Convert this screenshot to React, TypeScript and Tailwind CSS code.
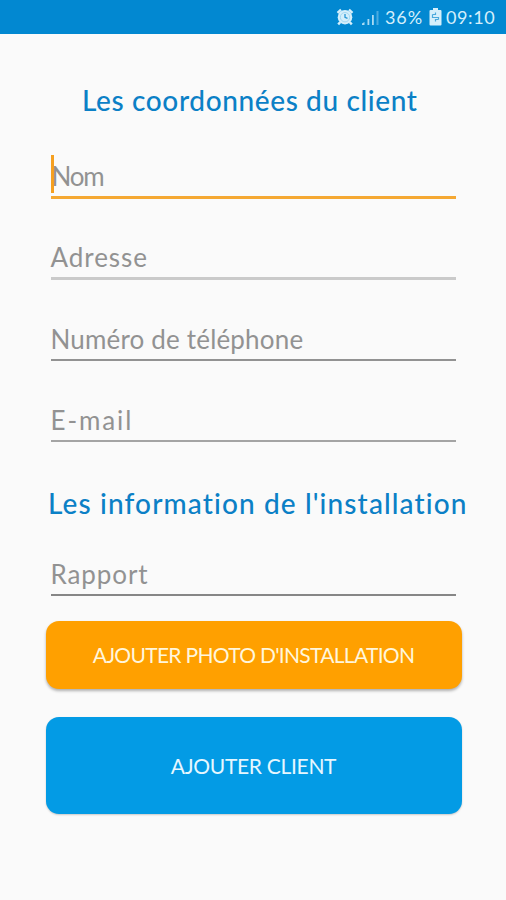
import { ReactNode } from 'react';

type FieldProps = {
  label: string;
  className: string;
  textClass: string;
  focused?: boolean;
};

function Field({ label, className, textClass, focused }: FieldProps) {
  return (
    <div className={`relative mx-auto flex w-[405px] items-end ${className}`}>
      {focused && (
        <span className="absolute -top-[3px] left-0 h-[38px] w-[3px] bg-[#f5a021]" />
      )}
      <span className={`whitespace-nowrap text-[26px] leading-[30px] text-[#929292] ${textClass}`}>
        {label}
      </span>
    </div>
  );
}

function Title({ children, className }: { children: ReactNode; className: string }) {
  return (
    <h2 className={`whitespace-nowrap text-[28px] leading-9 font-medium text-[#0b80c6] ${className}`}>
      {children}
    </h2>
  );
}

function StatusBar() {
  return (
    <header className="flex h-[34px] items-center bg-[#0288d1] pl-[336px] text-[#d5effb]">
      {/* Alarm */}
      <svg width="18" height="18" viewBox="0 0 18 18" fill="none">
        <path d="M1.5 4.8 5 1.7M16.5 4.8 13 1.7M4.2 14.2l-2 2.2M13.8 14.2l2 2.2" stroke="currentColor" strokeWidth="2.4" />
        <circle cx="9" cy="9.2" r="7.3" fill="currentColor" />
        <circle cx="9" cy="9.2" r="4.7" stroke="#a5d8f1" strokeWidth="1" />
        <path d="M9 6v3.4l2.5 1" stroke="#2596d5" strokeWidth="1.3" />
      </svg>

      {/* Signal */}
      <svg className="ml-[7px]" width="19" height="18" viewBox="0 0 19 18" fill="currentColor">
        <path d="M1 17v-1.5l2.5-1.5v3zM6.5 11h1.8v6H6.5zM11 7h1.8v10H11z" opacity=".8" />
        <path d="M15.5 3h2v14h-2z" opacity=".35" />
      </svg>

      <span className="ml-[5px] w-[39px] whitespace-nowrap text-[18px] leading-[34px] tracking-[0.9px]">
        36%
      </span>

      {/* Battery */}
      <svg className="ml-[5px]" width="13" height="18" viewBox="0 0 13 18">
        <path d="M4 0h5v2h2.5q1 0 1 1v13.5q0 1-1 1h-10q-1 0-1-1V3q0-1 1-1H4z" fill="currentColor" />
        <path d="M3.5 6.5h3v-2M9.5 11.5h-3v2M3.5 6.5v3h6v2" stroke="#4ba9dc" strokeWidth="1.2" fill="none" />
      </svg>

      <span className="ml-1 whitespace-nowrap text-[18px] leading-[34px] tracking-[0.6px]">
        09:10
      </span>
    </header>
  );
}

export default function App() {
  return (
    <div className="h-[900px] w-[506px] overflow-hidden bg-[#fafafa] font-['Lato',sans-serif]">
      <StatusBar />

      <main className="flex flex-col">
        {/* Client */}
        <Title className="mt-[48px] pl-[82px] tracking-[0.62px]">Les coordonnées du client</Title>

        <Field
          label="Nom"
          focused
          className="mt-[40px] h-[41px] border-b-3 border-[#f5a832] pb-[5px]"
          textClass="pl-px tracking-[-1.2px]"
        />
        <Field
          label="Adresse"
          className="mt-[40px] h-[41px] border-b-3 border-[#cacaca] pb-[5px]"
          textClass="tracking-[0.95px]"
        />
        <Field
          label="Numéro de téléphone"
          className="mt-[40px] h-[41px] border-b-2 border-[#929292] pb-[5px]"
          textClass="tracking-[0.18px]"
        />
        <Field
          label="E-mail"
          className="mt-[40px] h-[41px] border-b-2 border-[#a4a4a4] pb-[5px]"
          textClass="tracking-[1.9px]"
        />

        {/* Installation */}
        <Title className="mt-[43px] pl-[48px] tracking-[1.12px]">
          Les information de l'installation
        </Title>
        <Field
          label="Rapport"
          className="mt-[34px] h-[41px] border-b-2 border-[#868686] pb-[5px]"
          textClass="tracking-[0.9px]"
        />

        {/* Actions */}
        <button className="mt-[25px] ml-[45.5px] h-[68px] w-[416px] rounded-[13px] bg-[#ffa000] text-[21px] tracking-[-0.7px] whitespace-nowrap text-[#fff6dc] shadow-[0_2px_3px_rgba(0,0,0,0.3)]">
          AJOUTER PHOTO D'INSTALLATION
        </button>
        <button className="mt-[28px] ml-[45.5px] h-[97px] w-[416px] rounded-[13px] bg-[#039be5] text-[21px] tracking-[-0.3px] whitespace-nowrap text-[#e6f7ff] shadow-[0_1px_2px_rgba(0,0,0,0.2)]">
          AJOUTER CLIENT
        </button>
      </main>
    </div>
  );
}
